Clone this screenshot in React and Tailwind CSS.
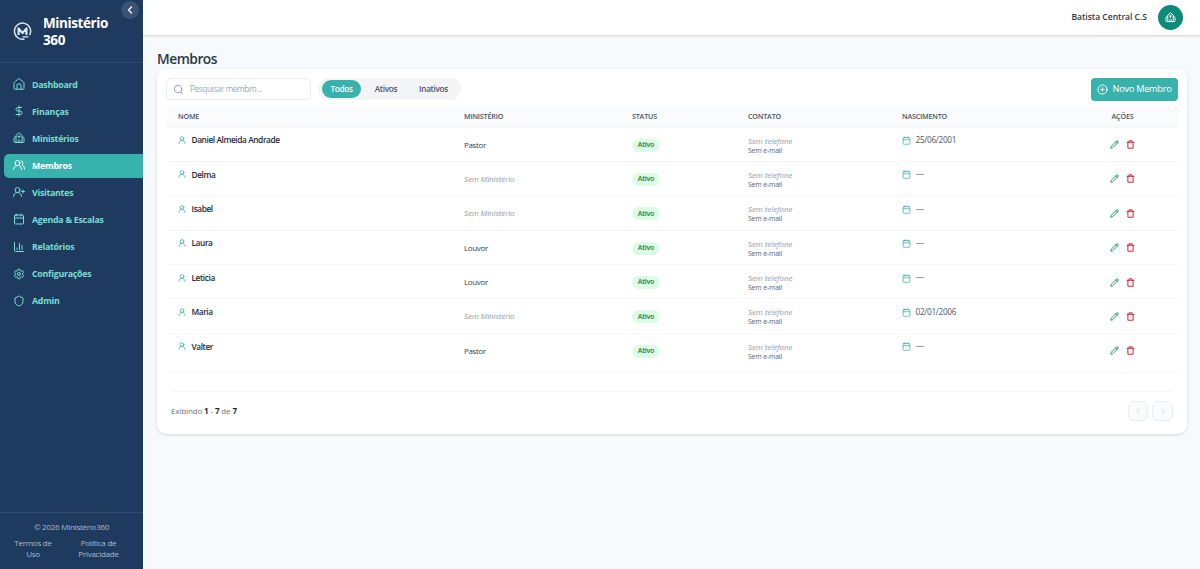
import React, { useState } from 'react';
import {
  Calendar, ChartColumn, Church, ChevronLeft, ChevronRight, CirclePlus,
  DollarSign, Pencil, Search, Settings, Shield, Trash,
} from 'lucide-react';

const stroke = {
  viewBox: '0 0 24 24',
  fill: 'none',
  stroke: 'currentColor',
  strokeWidth: 2,
  strokeLinecap: 'round',
  strokeLinejoin: 'round',
};

const HomeIcon = ({ className }) => (
  <svg {...stroke} className={className}>
    <path d="M2 10a2 2 0 0 1 .8-1.600l8-6.600a2 2 0 0 1 2.400 0l8 6.600a2 2 0 0 1 .8 1.600V21a1.500 1.500 0 0 1-1.500 1.500h-17A1.500 1.500 0 0 1 2 21z" />
    <path d="M8 22v-8a2 2 0 0 1 2-2h4a2 2 0 0 1 2 2v8" />
  </svg>
);

const UserIcon = ({ className }) => (
  <svg {...stroke} strokeWidth={2.4} className={className}>
    <circle cx="12" cy="7.500" r="5.500" />
    <path d="M3 22.500c0-5.500 4-9.500 9-9.500s9 4 9 9.500" />
  </svg>
);

const UsersIcon = ({ className }) => (
  <svg {...stroke} className={className}>
    <circle cx="9" cy="8" r="5" />
    <path d="M1 21c0-5 3.500-8 8-8s8 3 8 8" />
    <path d="M16.500 3.500a5 5 0 0 1 1.500 8.800c3 1.200 5 4 5 7.700" />
  </svg>
);

const UserPlusIcon = ({ className }) => (
  <svg {...stroke} className={className}>
    <circle cx="9" cy="8" r="5" />
    <path d="M1 21c0-5 3.500-8 8-8s8 3 8 8" />
    <path d="M20 8v6M17 11h6" />
  </svg>
);

const Logo = () => (
  <svg viewBox="0 0 24 24" fill="none" stroke="currentColor" className="w-[19px] h-[19px] shrink-0 text-[#dbe9f5]">
    <path d="M14.500 21.500a10.200 10.200 0 1 1 6.500-5" strokeWidth="1.800" />
    <path d="M7 16.500V8l5 6 5-6v8.500" strokeWidth="2.700" strokeLinejoin="round" />
    <path d="M12 18.800h7.500" strokeWidth="1.600" />
  </svg>
);

const menu = [
  { label: 'Dashboard', icon: HomeIcon },
  { label: 'Finanças', icon: DollarSign },
  { label: 'Ministérios', icon: Church },
  { label: 'Membros', icon: UsersIcon, active: true },
  { label: 'Visitantes', icon: UserPlusIcon },
  { label: 'Agenda & Escalas', icon: Calendar },
  { label: 'Relatórios', icon: ChartColumn },
  { label: 'Configurações', icon: Settings },
  { label: 'Admin', icon: Shield },
];

const filters = [
  { label: 'Todos', width: 'w-[39px]' },
  { label: 'Ativos', width: 'w-[50px]' },
  { label: 'Inativos', width: 'w-[45px]' },
];

const members = [
  { nome: 'Daniel Almeida Andrade', ministerio: 'Pastor', nascimento: '25/06/2001' },
  { nome: 'Delma' },
  { nome: 'Isabel' },
  { nome: 'Laura', ministerio: 'Louvor' },
  { nome: 'Leticia', ministerio: 'Louvor' },
  { nome: 'Maria', nascimento: '02/01/2006' },
  { nome: 'Valter', ministerio: 'Pastor' },
];

function Sidebar() {
  return (
    <aside className="relative w-[143px] shrink-0 h-full bg-[#1f3a5f] flex flex-col">
      <button className="absolute top-[1px] right-[4px] w-[18px] h-[18px] rounded-full bg-[#3b5273] text-white flex items-center justify-center">
        <ChevronLeft size={12} strokeWidth={2.5} />
      </button>
      <div className="h-[63px] shrink-0 border-b border-[#2f4a70] pl-[13px] flex items-center gap-[11px]">
        <Logo />
        <h1 className="w-[75px] pt-[2px] text-white font-bold text-[13.500px] leading-[17.500px] tracking-[-0.4px]">Ministério 360</h1>
      </div>
      <nav className="flex-1 pt-[9.500px] pl-[4px]">
        {menu.map(({ label, icon: Icon, active }) => (
          <a
            key={label}
            className={`h-[24.500px] mb-[2.560px] pl-[9px] flex items-center gap-[7px] rounded-l-[5px] text-[8.800px] tracking-[-0.25px] font-bold ${active ? 'bg-[#38b2ac] text-white' : 'text-[#76dfd3]'}`}
          >
            <Icon className="w-[12px] h-[12px] mb-px" strokeWidth={2} />
            <span className="pt-px">{label}</span>
          </a>
        ))}
      </nav>
      <footer className="h-[57px] shrink-0 border-t border-[#2f4a70] pt-[8px] text-center text-[8px] leading-[11px] tracking-[-0.25px] text-[#a9b9cf]">
        <p>© 2026 Ministério360</p>
        <div className="mt-[5px] flex pl-[5px]">
          <span className="w-[56px] px-[8px]">Termos de Uso</span>
          <span className="w-[75px] px-[10px]">Política de Privacidade</span>
        </div>
      </footer>
    </aside>
  );
}

function MemberRow({ member }) {
  return (
    <tr className="h-[34.400px] border-b border-[#f3f5f8] last:h-[39px]">
      <td className="pl-[11px] align-top pt-[7px]">
        <div className="flex items-center gap-[5.500px] h-[12px]">
          <UserIcon className="w-[8px] h-[8px] text-[#38b2ac] mb-px" />
          <span className="font-semibold text-[8.300px] tracking-[-0.4px] text-[#1f2937]">{member.nome}</span>
        </div>
      </td>
      <td className="pl-[11px] align-top pt-[11px] text-[8px] leading-[12px]">
        {member.ministerio
          ? <span className="text-[#374151] tracking-[-0.35px]">{member.ministerio}</span>
          : <span className="italic text-[#949bab] tracking-[-0.12px]">Sem Ministério</span>}
      </td>
      <td className="pl-[11px] align-top pt-[11px]">
        <span className="flex items-center justify-center w-[28px] h-[13px] rounded-full bg-[#dcfce7] text-[#15803d] font-semibold text-[7px] tracking-[-0.2px]">Ativo</span>
      </td>
      <td className="pl-[11px] align-top pt-[8px]">
        <p className="italic text-[#949bab] text-[8px] tracking-[-0.08px] leading-[10px]">Sem telefone</p>
        <p className="text-[#5b6473] text-[7px] tracking-[-0.22px] leading-[10px]">Sem e-mail</p>
      </td>
      <td className="pl-[11px] align-top pt-[7px]">
        <div className="flex items-center gap-[4.500px] h-[12px] text-[#4a5568] text-[8.200px] tracking-[-0.28px]">
          <Calendar className="w-[9px] h-[9px] text-[#38b2ac]" />
          {member.nascimento ? <span>{member.nascimento}</span> : <span className="text-[8.800px]">—</span>}
        </div>
      </td>
      <td className="align-top pt-[12px]">
        <div className="flex justify-center gap-[7px] h-[10px] items-center pr-px">
          <Pencil size={9} strokeWidth={2.6} className="text-[#229a68]" />
          <Trash size={9} strokeWidth={2.8} className="text-[#dc2637]" />
        </div>
      </td>
    </tr>
  );
}

export default function App() {
  const [filter, setFilter] = useState('Todos');

  return (
    <div className="w-[1200px] h-[569px] flex overflow-hidden bg-[#f6fafd] font-['Open_Sans','Noto_Sans',sans-serif]">
      <Sidebar />
      <div className="flex-1 flex flex-col">
        <header className="h-[35px] shrink-0 bg-white shadow-[0_1px_2px_rgba(0,0,0,0.16)] flex items-center justify-end gap-[11px] pr-[17px]">
          <span className="text-[8.500px] font-semibold text-[#2d3748]">Batista Central C.S</span>
          <span className="w-[25px] h-[25px] rounded-full bg-[#0d8a78] text-white flex items-center justify-center">
            <Church size={11} />
          </span>
        </header>

        <main className="pl-[14px] pr-[13px] pt-[14px]">
          <h2 className="text-[13.800px] leading-[20px] font-[550] tracking-[-0.5px] text-[#2d3748]">Membros</h2>
          <section className="h-[365px] bg-white rounded-[9px] shadow-[0_1px_3px_rgba(0,0,0,0.14)] px-[9px] pt-[9px]">
            <div className="flex items-center justify-between h-[22px]">
              <div className="flex items-center gap-[7px]">
                <div className="w-[145px] h-[22px] rounded-[5px] border border-[#e7ebf0] flex items-center pl-[6px] gap-[6px]">
                  <Search size={11} strokeWidth={2} className="text-[#8e97a6]" />
                  <span className="text-[8.200px] tracking-[-0.38px] text-[#a0a7b3]">Pesquisar membro...</span>
                </div>
                <div className="h-[22px] w-[143px] rounded-full bg-[#f3f4f6] flex items-center px-[4px] text-[8.200px] tracking-[-0.3px] font-semibold">
                  {filters.map(({ label, width }) => (
                    <button
                      key={label}
                      onClick={() => setFilter(label)}
                      className={`h-[18px] rounded-full ${width} ${filter === label ? 'bg-[#38b2ac] text-white' : 'text-[#4a5568]'}`}
                    >
                      {label}
                    </button>
                  ))}
                </div>
              </div>
              <button className="w-[87px] h-[23px] rounded-[4px] bg-[#38b2ac] text-white flex items-center justify-center gap-[4px] text-[9.200px] tracking-[-0.25px] font-medium">
                <CirclePlus size={11} strokeWidth={2} />
                <span>Novo Membro</span>
              </button>
            </div>

            <table className="w-[1011px] table-fixed mt-[7px] ml-[1px] border-collapse">
              <thead>
                <tr className="h-[20px] bg-[#f9fbfd] border-b border-[#f3f5f8] text-left text-[7.200px] tracking-[-0.2px] text-[#4a5568]">
                  <th className="w-[286px] pl-[11px] font-semibold">NOME</th>
                  <th className="w-[168px] pl-[11px] font-semibold">MINISTÉRIO</th>
                  <th className="w-[116px] pl-[11px] font-semibold">STATUS</th>
                  <th className="w-[154px] pl-[11px] font-semibold">CONTATO</th>
                  <th className="w-[176px] pl-[11px] font-semibold">NASCIMENTO</th>
                  <th className="w-[111px] font-semibold text-center">AÇÕES</th>
                </tr>
              </thead>
              <tbody>
                {members.map(m => <MemberRow key={m.nome} member={m} />)}
              </tbody>
            </table>

            <div className="mx-[5px] mt-[18px] pt-[9px] border-t border-[#f3f5f8] flex items-center justify-between text-[8px] tracking-[-0.13px] text-[#6b7280]">
              <span>Exibindo <b className="text-[#1f2937]">1</b> - <b className="text-[#1f2937]">7</b> de <b className="text-[#1f2937]">7</b></span>
              <div className="flex gap-[4px] text-[#c9ced6]">
                <button className="w-[20px] h-[20px] rounded-[6px] border border-[#e9ecf0] bg-[#fafbfc] flex items-center justify-center"><ChevronLeft size={8} /></button>
                <button className="w-[21px] h-[20px] rounded-[6px] border border-[#e9ecf0] bg-[#fafbfc] flex items-center justify-center"><ChevronRight size={8} /></button>
              </div>
            </div>
          </section>
        </main>
      </div>
    </div>
  );
}
